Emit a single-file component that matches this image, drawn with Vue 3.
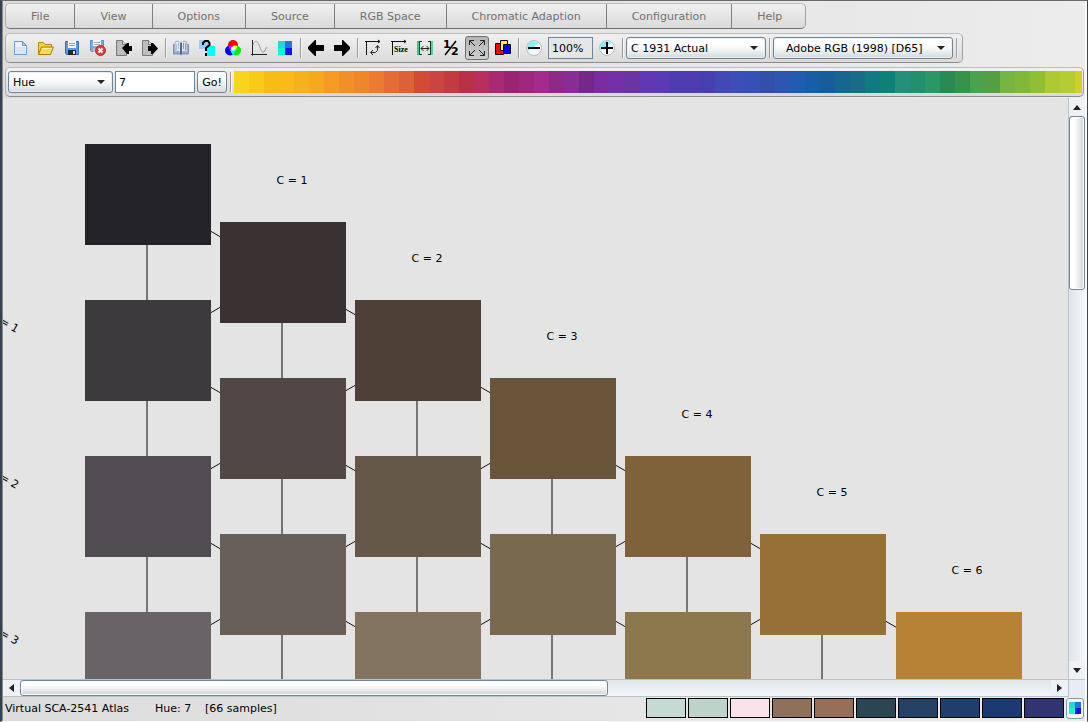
<script setup>
import { ref } from 'vue'

const menus = ['File', 'View', 'Options', 'Source', 'RGB Space', 'Chromatic Adaption', 'Configuration', 'Help']

const quad = '<path fill="#2ad4d4" d="M1 1h7v7H1z"/><path fill="#2472dc" d="M8 1h7v7H8z"/><path fill="#00ffd8" d="M1 8h7v7H1z"/><path fill="#1414ee" d="M8 8h7v7H8z"/>'
const axes = '<path d="M0 1.5h15M1.5 1v14M13 0l2 1.5L13 3" fill="none" stroke="#111"/>'
const corners = '<g fill="none" stroke="#222"><path d="M.5 5V.5H5M11 .5h4.5V5M15.500 11v4.500H11M5 15.500H.5V11"/><path d="M1 1l5 5M15 1l-5 5M15 15l-5-5M1 15l5-5"/></g>'
const bubble = '<circle cx="8" cy="8" r="7.500" fill="#f4f8f8" stroke="#b4c0c0"/><path d="M2 11A7 7 0 0 1 13 3L5 8z" fill="#8ff6fb"/><path d="M8 1a7 7 0 0 0-7 7h7z" fill="#7df3fa"/>'

const icons = {
  create: '<path d="M2.500 1.500h8l4 4v9h-12z" fill="#eaf3fd" stroke="#6b9bd3"/><path d="M4 7h9v7H4z" fill="#d6e7fa"/><path d="M10.500 1.500v4h4z" fill="#a9cbf0" stroke="#6b9bd3"/>',
  open: '<path d="M.5 14.500V2.500h5l1.500 2h6.500v3" fill="#f5cf4e" stroke="#b8860b"/><path d="M.5 14.500l3-7.500h12l-3 7.500z" fill="#fbd958" stroke="#b07a08"/><path d="M4.500 8.500h9" stroke="#fff3b0"/>',
  save: '<path d="M1.500 1.500h13v13h-12l-1-1z" fill="#5c9bd8" stroke="#376fa8"/><path d="M4 1h8v7H4z" fill="#f7f7f7"/><path d="M5 3.500h6M5 5.500h6" stroke="#a0a0a0"/><path d="M4 10h8v5H4z" fill="#202830"/><path d="M9 11h2v3H9z" fill="#d8dde2"/>',
  discard: '<path d="M.5.5h13v11H1.500l-1-1z" fill="#77addd" stroke="#5a8fc4"/><path d="M3 0h8v6H3z" fill="#f7f7f7"/><path d="M4 2.500h6M4 4.500h6" stroke="#a8a8a8"/><path d="M3 8h5v4H3z" fill="#b4c4d4"/><circle cx="10.500" cy="10.500" r="5" fill="#dd3c3c" stroke="#b92a2a"/><path d="M8.500 8.500l4 4M12.500 8.500l-4 4" stroke="#fff" stroke-width="2"/>',
  import: '<path d="M.5.5h6l4 4v11H.5z" fill="#bdbdbd" stroke="#777"/><path d="M6.500.5v4h4" fill="#ddd" stroke="#777"/><path d="M6 8l5-5h2v3h3v5h-3v3h-2z" fill="#000"/>',
  export: '<path d="M.5.5h6l4 4v11H.5z" fill="#bdbdbd" stroke="#777"/><path d="M6.500.5v4h4" fill="#ddd" stroke="#777"/><path d="M16 8.500l-5 5.500H9v-3H6V6h3V3h2z" fill="#000"/>',
  book: '<path d="M.5 4v10h6l1.500 1 1.500-1h6V4" fill="#98a5cc" stroke="#8290b4"/><path d="M2 2l3-1 3 2 3-2 3 1v10l-3-1-3 2-3-2-3 1z" fill="#dce8f4" stroke="#a5b2c8"/><path d="M8 3v11" stroke="#5f6684" stroke-width="2"/><path d="M3.500 4v6M5.500 3v6" stroke="#9cc4dc"/><path d="M10.500 3v6" stroke="#7d9cd0"/><path d="M12.500 3v7" stroke="#a58fae"/>',
  help: '<path fill="#99ccff" d="M0 0h10v9H0z"/><path fill="#0ff" d="M8 6h8v10H8z"/><path d="M4 5V3l2-2h3l1.500 2v2L7 8v3" fill="none" stroke="#000" stroke-width="2"/><path d="M6 13h2v3H6z"/>',
  mix: '<circle cx="8" cy="5" r="5" fill="#f00"/><circle cx="5" cy="10.500" r="5" fill="#00f"/><circle cx="11" cy="10.500" r="5" fill="#0e0"/><path d="M3.500 6l4-.5L8 8l-3 2z" fill="#f0f"/><path d="M8.500 5.500l4 .5L11 10 8 8z" fill="#ff0"/><path d="M8 8l3 2-3 5-3-5z" fill="#0ff"/><circle cx="8" cy="8.500" r="2" fill="#fff"/>',
  curve: '<path d="M1.500 0v15.500M0 14.500h16" stroke="#222" fill="none"/><path d="M2 5c2-5 4-5 6 0s3 8 5 7l3-5" fill="none" stroke="#999"/>',
  quad,
  back: '<path d="M0 7l7-7h1v5h8v6H8v5H7L0 9z"/>',
  forward: '<path d="M16 7L9 0H8v5H0v6h8v5h1l7-7z"/>',
  swap: axes + '<path d="M6 12.500h4.500l2-2V6M10.500 8l2-2.500 2 2.500M8 10l-2.500 2.500L8 15" fill="none" stroke="#222"/>',
  size: axes + '<text x="3" y="12" font-size="8" font-weight="700" font-family="Liberation Serif, serif">Size</text>',
  fit: '<path d="M0 1h5v1H3v12h2v1H0z" fill="#18351f"/><path d="M0 1h2v14H0z" fill="#00e080"/><path d="M16 1h-5v1h2v12h-2v1h5z" fill="#18351f"/><path d="M14 1h2v14h-2z" fill="#5fcf9a"/><path d="M4 8.500h8M6.500 6L4 8.500 6.500 11M9.500 6L12 8.500 9.500 11" fill="none" stroke="#222"/>',
  half: '<text x="0" y="8" font-size="11" font-weight="700" font-family="DejaVu Sans, sans-serif">1</text><text x="8" y="15" font-size="11" font-weight="700" font-family="DejaVu Sans, sans-serif">2</text><path d="M2 15L13 1" stroke="#000" stroke-width="1.500"/>',
  expand: corners,
  layers: '<path d="M.5 3.500h8v11h-8z" fill="#f00" stroke="#000"/><path d="M5.500.5h7v10h-7z" fill="#ff0" stroke="#000"/><path d="M8.500 4.500h7v9h-7z" fill="#00f" stroke="#000"/>',
  minus: bubble + '<path d="M2 7h12v2H2z"/>',
  plus: bubble + '<path d="M2 7h12v2H2z"/><path d="M7 2h2v12H7z"/>'
}

const tools = [
  ['create', 'New'], ['open', 'Open'], ['save', 'Save'], ['discard', 'Close file'], ['import', 'Import'], ['export', 'Export'], null,
  ['book', 'Atlas'], ['help', 'Identify'], ['mix', 'Mix'], ['curve', 'Curve'], ['quad', 'Patches'], null,
  ['back', 'Back'], ['forward', 'Forward'], null,
  ['swap', 'Swap axes'], ['size', 'Sample size'], ['fit', 'Spacing'], ['half', 'Half steps'], ['expand', 'Expand'], ['layers', 'Layers'], null,
  ['minus', 'Zoom out']
]

const dimension = ref('Hue')
const value = ref('7')
const zoom = ref('100%')

const spectrum = ('f8d41a f8cb16 f7bd14 f9ba18 f6b21c f6a81e f59a24 f19026 ee862a ea7b31 e46d35 dc6039 d24b35 cb443f c43a41 b93048 b82e5e a82a70 992570 ' +
  '9f277e a42a8e 8e2889 872e96 742888 7a2ca0 7330a9 6a35a0 6138b2 5b3ab5 4f3cb0 4f3cb0 483fae 4049b4 3c4eb8 3650b8 3350a9 2d56b2 225cb2 ' +
  '175ea6 185c9a 166690 1a6c86 107a82 0e8078 268f7c 228f6e 2c9764 2a8a54 36944a 4aa24e 53a042 76b544 82b83a 92be34 adc934 b5cc32 d0d02c').split(' ')

// Samples by chroma column, from the darkest value down
const columns = [
  ['#242328', '#3d3a3d', '#514c52', '#696266'],
  ['#3a3232', '#514744', '#685f59'],
  ['#4e4037', '#655849', '#827460'],
  ['#68553a', '#78694f'],
  ['#80623a', '#8d774c'],
  ['#977037'],
  ['#b68235']
]
const STEP_X = 135
const STEP_Y = 78
const nodes = columns.flatMap((col, c) =>
  col.map((fill, r) => ({ fill, c, x: 82 + c * STEP_X + (c === 6 ? 1 : 0), y: 46 + c * STEP_Y + r * STEP_Y * 2 }))
)

const chips = ['#c5dad3', '#bdd3ca', '#f9e2ea', '#8f705b', '#976e58', '#2a4652', '#244064', '#203e6c', '#1c3a72', '#303470']
</script>

<template>
  <main class="window">
    <header class="header">
      <nav class="menu bar">
        <button v-for="m in menus" :key="m" type="button">{{ m }}</button>
      </nav>

      <div class="tools bar">
        <template v-for="(t, i) in tools" :key="i">
          <span v-if="!t" class="sep"></span>
          <button v-else type="button" class="tool" :class="{ pressed: t[0] === 'expand' }" :aria-label="t[1]">
            <svg viewBox="0 0 16 16" v-html="icons[t[0]]"></svg>
          </button>
        </template>
        <input v-model="zoom" class="zoom" aria-label="Zoom">
        <button type="button" class="tool" aria-label="Zoom in"><svg viewBox="0 0 16 16" v-html="icons.plus"></svg></button>
        <span class="sep"></span>
        <span class="picker observer">
          <select aria-label="Illuminant"><option>C 1931 Actual</option></select>
        </span>
        <span class="sep"></span>
        <span class="picker space">
          <select aria-label="RGB space"><option>Adobe RGB (1998) [D65]</option></select>
        </span>
        <span class="sep"></span>
      </div>

      <form class="finder bar" @submit.prevent>
        <span class="picker dimension">
          <select v-model="dimension" aria-label="Dimension"><option>Hue</option></select>
        </span>
        <input v-model="value" class="value" aria-label="Value">
        <button type="submit" class="go">Go!</button>
        <span class="sep"></span>
        <div class="spectrum">
          <i v-for="(c, i) in spectrum" :key="i" :style="{ background: '#' + c }"></i>
        </div>
      </form>
    </header>

    <div class="view">
      <svg class="atlas">
        <g v-for="(n, i) in nodes" :key="'l' + i">
          <path class="rise" :d="`M${n.x + 62} ${n.y + 50}v156`" />
          <path v-if="n.c < 6" class="link" :d="`M${n.x + 63} ${n.y + 51}l135 78`" />
          <path v-if="n.c > 0" class="link" :d="`M${n.x + 63} ${n.y + 49}l-135 78`" />
        </g>
        <rect v-for="(n, i) in nodes" :key="'n' + i" :x="n.x" :y="n.y" width="126" height="101" :fill="n.fill" />
        <text v-for="c in 6" :key="'c' + c" :x="154 + c * STEP_X" :y="8 + c * STEP_Y" text-anchor="middle">C = {{ c }}</text>
        <text v-for="v in 3" :key="'v' + v" :transform="`translate(13 ${79 + v * 156}) rotate(30)`" text-anchor="end">= {{ v }}</text>
      </svg>
      <div class="scroll vertical">
        <button type="button" aria-label="Scroll up"><svg viewBox="0 0 8 5"><path d="M0 5l4-5 4 5z" /></svg></button>
        <div class="track"><div class="thumb"></div></div>
        <button type="button" aria-label="Scroll down"><svg viewBox="0 0 8 5"><path d="M0 0l4 5 4-5z" /></svg></button>
      </div>
      <div class="scroll horizontal">
        <button type="button" aria-label="Scroll left"><svg viewBox="0 0 5 8"><path d="M5 0L0 4l5 4z" /></svg></button>
        <div class="track"><div class="thumb"></div></div>
        <button type="button" aria-label="Scroll right"><svg viewBox="0 0 5 8"><path d="M0 0l5 4-5 4z" /></svg></button>
      </div>
      <div class="corner"></div>
    </div>

    <footer class="status">
      <span class="name">Virtual SCA-2541 Atlas</span>
      <span class="hue">Hue: 7</span>
      <span>[66 samples]</span>
      <div class="chips">
        <button v-for="c in chips" :key="c" type="button" class="chip" :aria-label="c" :style="{ background: c }"></button>
        <button type="button" class="patches" aria-label="Patches"><svg viewBox="1 1 14 14" v-html="icons.quad"></svg></button>
      </div>
    </footer>
  </main>
</template>

<style>
body { margin: 0; }
</style>

<style scoped>
* { box-sizing: border-box; }

.window {
  display: flex;
  flex-direction: column;
  height: 100vh;
  overflow: hidden;
  border: solid;
  border-width: 1px 1px 1px 2px;
  border-color: #6a6a6a #3c4652 #fafafa #36414f;
  font: 11px "DejaVu Sans", sans-serif;
  color: #000;
  background: linear-gradient(90deg, #dcdcdc, #ececec);
  box-shadow: inset 1px 0 #8c8c8c, inset -2px 0 #fafafa;
  padding: 0 2px 2px 1px;
}

button, input, select { font: inherit; color: inherit; margin: 0; padding: 0; }

.header {
  display: flex;
  flex-direction: column;
  align-items: flex-start;
  gap: 4px;
  padding: 2px 1px 1px 2px;
}

.bar {
  display: flex;
  align-items: center;
  border: 1px solid;
  border-color: #bdbdbd #a0a0a0 #8c8c8c #b0b0b0;
  border-radius: 5px;
  background: linear-gradient(#f0f0f0, #dadada);
}

.menu { height: 26px; overflow: hidden; border-bottom-color: #707070; }
.menu button {
  align-self: stretch;
  padding: 0 25px;
  border: 0;
  border-right: 1px solid #808080;
  background: none;
  color: #707070;
  white-space: nowrap;
}
.menu button:last-child { border-right: 0; padding-right: 23px; }

.tools, .finder { height: 30px; gap: 2px; padding: 0 2px; }
.tools { padding-right: 4px; }
.finder { align-self: stretch; padding-right: 1px; }

.tool {
  display: grid;
  place-items: center;
  width: 24px;
  height: 24px;
  flex: none;
  border: 0;
  background: none;
}
.tool svg { width: 16px; height: 16px; overflow: visible; }
.pressed {
  border: 1px solid #707070;
  border-radius: 3px;
  background: linear-gradient(#b6b6b6, #cdcdcd);
}

.sep { flex: none; width: 2px; height: 20px; margin-left: 1px; border-left: 1px solid #9c9c9c; border-right: 1px solid #f4f4f4; }

.zoom, .value { border: 1px solid #6f8599; height: 22px; flex: none; }
.zoom { width: 45px; padding-left: 3px; background: #e6e6e6; }
.value { width: 80px; padding-left: 3px; background: #fff; }

.picker { position: relative; flex: none; height: 22px; }
.picker select {
  appearance: none;
  width: 100%;
  height: 100%;
  padding-left: 4px;
  border: 1px solid #708496;
  border-radius: 3px;
  box-shadow: inset 0 0 0 1px #e9eef2;
  background: linear-gradient(#fff 30%, #f2f4f6 60%, #d3d8de);
}
.picker::after {
  content: "";
  position: absolute;
  right: 8px;
  top: 9px;
  border: solid transparent;
  border-width: 4px 4px 0;
  border-top-color: #222;
  pointer-events: none;
}
.observer { width: 140px; }
.space { width: 180px; }
.space select { padding-left: 12px; }
.dimension { width: 105px; }

.go {
  width: 30px;
  height: 22px;
  flex: none;
  border: 1px solid #708496;
  border-radius: 3px;
  background: linear-gradient(#fff 30%, #d8dce1);
}

.spectrum { display: flex; flex: 1; height: 22px; }
.spectrum i { flex: 15; }
.spectrum i:last-child { flex: 7; }

.view {
  flex: 1;
  min-height: 0;
  display: grid;
  grid-template: minmax(0, 1fr) 18px / minmax(0, 1fr) 17px;
  background: #e4e4e4;
}
.atlas { width: 100%; height: 100%; overflow: hidden; }
.rise { stroke: #757575; stroke-width: 2; }
.link { stroke: #111; stroke-width: 1; }

.scroll { display: flex; border: 0 solid #b8c2cb; }
.scroll button { display: grid; place-items: center; flex: none; border: 0; background: #eef1f5; }
.scroll path { fill: #222; }
.track { flex: 1; }
.thumb { border: 1px solid #71869a; border-radius: 3px; box-shadow: inset 0 0 0 1px #fff; }
.vertical { flex-direction: column; border-left-width: 1px; background: linear-gradient(90deg, #dfe5ea, #f4f7fa); }
.vertical button { height: 18px; }
.vertical svg { width: 8px; height: 5px; }
.vertical .thumb { height: 32%; background: linear-gradient(90deg, #fff 30%, #d0d4d9); }
.horizontal { border-top-width: 1px; border-bottom-width: 1px; background: linear-gradient(#dfe5ea, #f4f7fa); }
.horizontal button { width: 17px; }
.horizontal svg { width: 5px; height: 8px; }
.horizontal .thumb { width: 57%; height: 100%; background: linear-gradient(#fff 30%, #d0d4d9); }
.corner { background: #e8ecf5; border-top: 1px solid #b8c2cb; border-left: 1px solid #b8c2cb; }

.status { display: flex; align-items: center; height: 22px; padding-left: 2px; white-space: nowrap; }
.name { width: 150px; }
.hue { width: 50px; }
.chips { display: flex; align-items: center; gap: 2px; margin-left: auto; padding-right: 1px; }
.chip { width: 40px; height: 20px; border: 1px solid #000; }
.patches {
  display: grid;
  place-items: center;
  width: 18px;
  height: 21px;
  border: 1px solid #8797a6;
  border-radius: 3px;
  background: #f4f6f8;
}
.patches svg { width: 12px; height: 12px; }
</style>
